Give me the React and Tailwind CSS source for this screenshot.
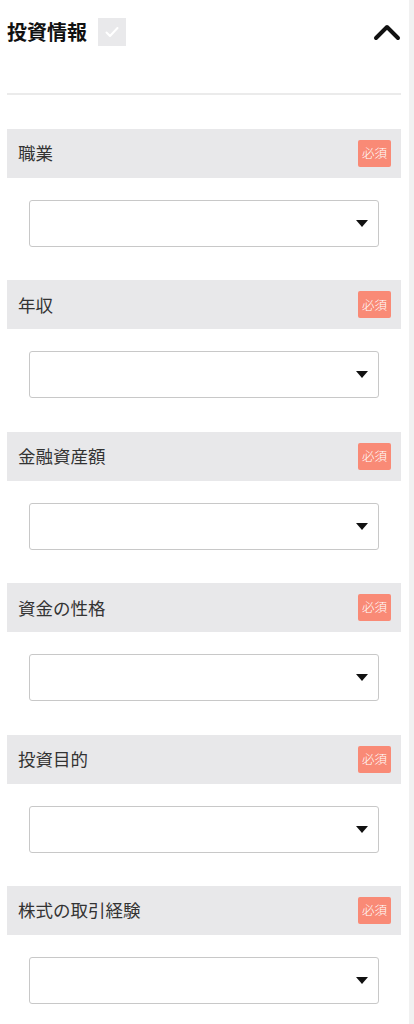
import React from 'react';

const fields = ['職業', '年収', '金融資産額', '資金の性格', '投資目的', '株式の取引経験'];

const ChevronUp = ({ className }) => (
    <svg className={className} viewBox="0 0 28 18" fill="none" stroke="currentColor">
        <path d="M3 15L14 4l11 11" strokeWidth={4} strokeLinecap="round" strokeLinejoin="round" />
    </svg>
);

const CheckBox = () => (
    <span className="flex h-[28px] w-[28px] items-center justify-center bg-[#e9e9eb]">
        <svg className="h-[16px] w-[16px]" viewBox="0 0 16 16" fill="none" stroke="#ffffff">
            <path d="M2.5 8.5l3.5 3.5 7.5-8" strokeWidth={2} strokeLinecap="round" strokeLinejoin="round" />
        </svg>
    </span>
);

const Field = ({ label }) => (
    <div className="mb-[33.4px]">
        <div className="flex h-[49px] items-center justify-between bg-[#e8e8ea] pl-[11px] pr-[10px]">
            <span className="text-[17.5px] text-[#333333]">{label}</span>
            <span className="flex h-[27px] w-[33px] items-center justify-center rounded-[2px] bg-[#f98a76] text-[12.5px] font-light text-white">
                必須
            </span>
        </div>
        <div className="mx-[22px] mt-[22px] flex h-[47px] items-center justify-end rounded-[3px] border border-[#c8c8c8] bg-white pr-[10px]">
            <svg className="h-[7px] w-[12px]" viewBox="0 0 12 7">
                <path d="M0 0h12L6 7z" fill="#111111" />
            </svg>
        </div>
    </div>
);

export default function App() {
    return (
        <div
            className="flex min-h-[1024px] w-[414px] bg-white"
            style={{ fontFamily: '"Noto Sans CJK JP", "Noto Sans", sans-serif' }}
        >
            <div className="flex-1 pl-[7px] pr-[8px]">
                <div className="flex h-[63px] items-center justify-between">
                    <div className="flex items-center gap-[11px]">
                        <h1 className="text-[20px] font-bold text-[#111111]">投資情報</h1>
                        <CheckBox />
                    </div>
                    <ChevronUp className="h-[18px] w-[28px] text-[#111111]" />
                </div>
                <div className="mt-[30px] h-[2px] bg-[#ebebeb]" />
                <div className="mt-[34px]">
                    {fields.map((f) => (
                        <Field key={f} label={f} />
                    ))}
                </div>
            </div>
            <div className="w-[5px] bg-[#f1f1f1]" />
        </div>
    );
}
